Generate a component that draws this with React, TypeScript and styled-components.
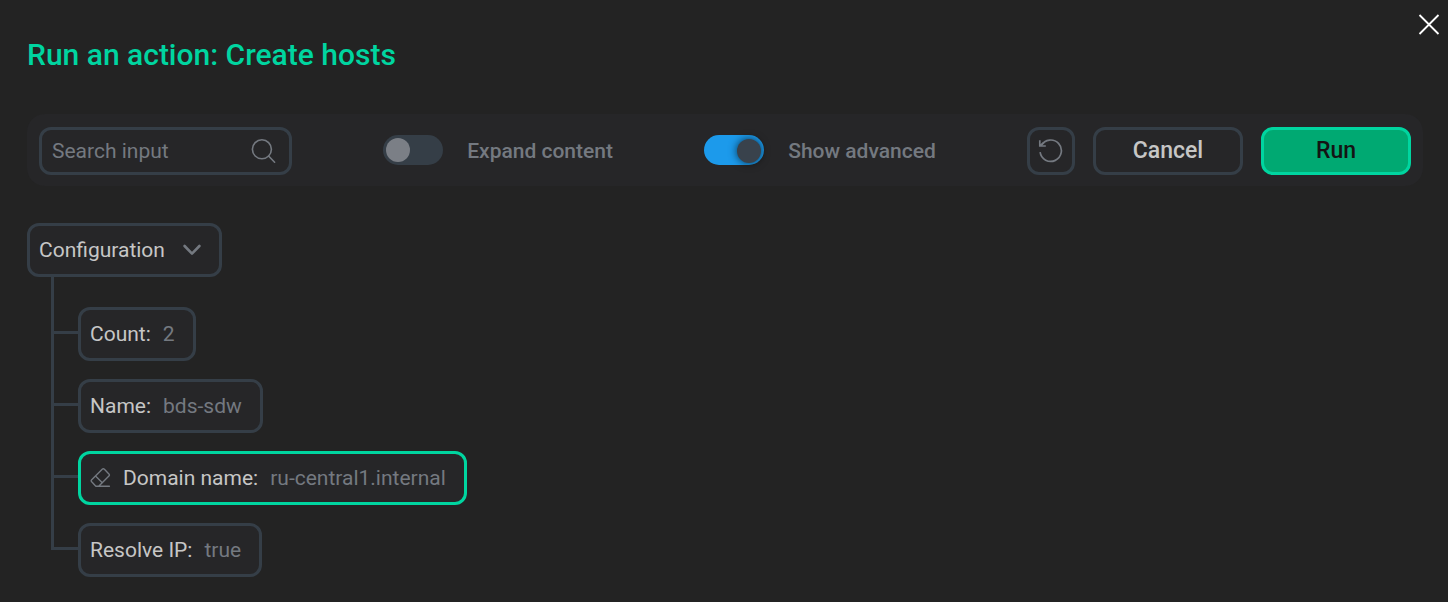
import React, { useState } from "react";
import styled, { createGlobalStyle } from "styled-components";

const color = {
  page: "#232323",
  surface: "#262628",
  line: "#353e47",
  text: "#c6c6c6",
  muted: "#747980",
  accent: "#00d5a0",
  run: "#00a972",
  blue: "#1c9aeb",
};

const GlobalStyle = createGlobalStyle`
  *, *::before, *::after { box-sizing: border-box; }
  body {
    margin: 0;
    background: ${color.page};
    color: ${color.text};
    font-family: Roboto, "Liberation Sans", sans-serif;
    font-size: 21px;
    line-height: 30px;
  }
  button, input { font: inherit; color: inherit; }
`;

const Dialog = styled.main`
  display: flex;
  flex-direction: column;
  padding-bottom: 24px;
`;

const Header = styled.header`
  display: flex;
  align-items: flex-start;
  justify-content: space-between;
  padding: 6px 0 0 27px;
  margin-bottom: 41px;
`;

const Title = styled.h1`
  margin: 31px 0 0;
  color: ${color.accent};
  font-size: 30px;
  font-weight: 500;
  line-height: 36px;
`;

const CloseButton = styled.button`
  display: flex;
  padding: 8px;
  border: 0;
  background: none;
  cursor: pointer;
`;

const Toolbar = styled.form`
  display: flex;
  align-items: center;
  justify-content: space-between;
  margin: 0 25px 0 27px;
  padding: 13px 12px 11px;
  border-radius: 18px;
  background: ${color.surface};
`;

const SearchField = styled.label`
  display: flex;
  align-items: center;
  width: 253px;
  height: 48px;
  padding: 0 12px 0 10px;
  border: 3px solid ${color.line};
  border-radius: 12px;
  color: ${color.muted};
`;

const SearchInput = styled.input`
  flex: 1;
  min-width: 0;
  padding: 0;
  border: 0;
  outline: 0;
  background: none;
  color: ${color.text};
  &::placeholder {
    color: ${color.muted};
    opacity: 1;
  }
`;

const SwitchLabel = styled.label`
  display: flex;
  align-items: center;
  gap: 24px;
  color: ${color.muted};
  font-weight: 500;
`;

const SwitchInput = styled.input`
  appearance: none;
  display: flex;
  align-items: center;
  width: 60px;
  height: 30px;
  margin: 0 0 2px;
  padding: 0 3px;
  border-radius: 15px;
  background: ${color.line};
  cursor: pointer;
  &::before {
    content: "";
    width: 24px;
    height: 24px;
    border-radius: 50%;
    background: #7b7f86;
  }
  &:checked {
    justify-content: flex-end;
    padding-top: 2px;
    background: ${color.blue};
  }
  &:checked::before {
    background: #39424c;
    box-shadow: 0 0 9px rgba(0, 0, 0, 0.7);
  }
`;

const Actions = styled.div`
  display: flex;
  gap: 18px;
`;

const Button = styled.button<{ $primary?: boolean; $square?: boolean }>`
  display: flex;
  align-items: center;
  justify-content: center;
  width: ${(p) => (p.$square ? 48 : 150)}px;
  height: 48px;
  padding: 0 0 ${(p) => (p.$square ? 2 : 0)}px;
  border: 3px solid ${(p) => (p.$primary ? color.accent : color.line)};
  border-radius: 12px;
  background: ${(p) => (p.$primary ? color.run : color.surface)};
  color: ${(p) => (p.$primary ? "#141414" : p.$square ? color.muted : color.text)};
  font-size: 23px;
  font-weight: 500;
  cursor: pointer;
`;

const Tree = styled.section`
  display: flex;
  flex-direction: column;
  align-items: flex-start;
  padding: 37px 25px 0 27px;
`;

const Node = styled.button<{ $active?: boolean; $parent?: boolean }>`
  display: flex;
  align-items: center;
  gap: ${(p) => (p.$parent ? 18 : 12)}px;
  height: 54px;
  padding: 0 18px 0 9px;
  border: 3px solid ${(p) => (p.$active ? color.accent : color.line)};
  border-radius: 12px;
  background: ${color.surface};
  cursor: pointer;
`;

const NodeValue = styled.span`
  color: ${color.muted};
`;

const NodeIcon = styled.svg`
  color: ${color.muted};
`;

const Children = styled.ul`
  margin: 0;
  padding: 0 0 0 24px;
  list-style: none;
`;

const Branch = styled.li`
  --space: 18px;
  display: flex;
  align-items: flex-end;
  &:first-child {
    --space: 30px;
  }
`;

const Connector = styled.span`
  display: flex;
  flex-direction: column;
  align-self: stretch;
  width: 27px;
  &::before {
    content: "";
    height: calc(var(--space) + 27px);
    border-left: 3px solid ${color.line};
    border-bottom: 3px solid ${color.line};
  }
  &::after {
    content: "";
    flex: 1;
    border-left: 3px solid ${color.line};
  }
  ${Branch}:last-child &::after {
    border-left-color: transparent;
  }
`;

const NodeSlot = styled.div`
  padding-top: var(--space);
`;

const CloseIcon = () => (
  <svg width="22" height="22" viewBox="0 0 22 22" fill="none" stroke="#fff" strokeWidth="1.8" aria-hidden="true">
    <path d="M1.5 1 20.5 20M20.5 1 1.5 20" />
  </svg>
);

const SearchIcon = () => (
  <svg width="26" height="26" viewBox="0 0 26 26" fill="none" stroke="currentColor" strokeWidth="1.6" strokeLinecap="round" aria-hidden="true">
    <circle cx="10.9" cy="11.3" r="9.5" />
    <path d="M17.6 18 23.6 24.2" />
  </svg>
);

const ResetIcon = () => (
  <svg width="26" height="26" viewBox="0 0 26 26" fill="none" stroke="currentColor" strokeWidth="1.7" aria-hidden="true">
    <path d="M2.1 15.2A10.7 10.7 0 1 0 3.4 8.4" />
    <path d="M1.8 3.2V9H7.8M1.8 9 6 5.4" />
  </svg>
);

const ChevronIcon = () => (
  <NodeIcon width="18" height="12" viewBox="0 0 18 12" fill="none" stroke="currentColor" strokeWidth="2.6" strokeLinecap="round" strokeLinejoin="round" aria-hidden="true">
    <path d="M1.6 2 9 9.6 16.4 2" />
  </NodeIcon>
);

const EraserIcon = () => (
  <NodeIcon width="21" height="21" viewBox="0 0 21 21" fill="none" stroke="currentColor" strokeWidth="1.4" strokeLinecap="round" strokeLinejoin="round" aria-hidden="true">
    <path d="M5.6 17.4 1.7 13.3Q.7 12.2 1.7 11.2L12.2.8Q13.3-.2 14.4.8L18.9 5.4Q19.9 6.5 18.9 7.6L9.2 17.2Q8.7 17.7 8 17.7H6.4Q5.9 17.7 5.6 17.4ZM5.5 7.5 12.3 14.2M8 17.7H19.4" transform="translate(0 .5)" />
  </NodeIcon>
);

const fields = [
  { label: "Count", value: "2" },
  { label: "Name", value: "bds-sdw" },
  { label: "Domain name", value: "ru-central1.internal", edited: true },
  { label: "Resolve IP", value: "true" },
];

interface SwitchProps {
  label: string;
  initial?: boolean;
}

const Switch = ({ label, initial = false }: SwitchProps) => {
  const [on, setOn] = useState(initial);
  return (
    <SwitchLabel>
      <SwitchInput type="checkbox" role="switch" checked={on} onChange={(e) => setOn(e.target.checked)} />
      {label}
    </SwitchLabel>
  );
};

export default function App() {
  const [open, setOpen] = useState(true);
  return (
    <>
      <GlobalStyle />
      <Dialog>
        <Header>
          <Title>Run an action: Create hosts</Title>
          <CloseButton type="button" aria-label="Close">
            <CloseIcon />
          </CloseButton>
        </Header>
        <Toolbar onSubmit={(e) => e.preventDefault()}>
          <SearchField>
            <SearchInput type="text" placeholder="Search input" aria-label="Search input" />
            <SearchIcon />
          </SearchField>
          <Switch label="Expand content" />
          <Switch label="Show advanced" initial />
          <Actions>
            <Button type="button" $square aria-label="Reset">
              <ResetIcon />
            </Button>
            <Button type="button">Cancel</Button>
            <Button type="submit" $primary>
              Run
            </Button>
          </Actions>
        </Toolbar>
        <Tree>
          <Node type="button" $parent aria-expanded={open} onClick={() => setOpen(!open)}>
            Configuration
            <ChevronIcon />
          </Node>
          {open && (
            <Children>
              {fields.map((field) => (
                <Branch key={field.label}>
                  <Connector />
                  <NodeSlot>
                    <Node type="button" $active={field.edited}>
                      {field.edited && <EraserIcon />}
                      <span>{field.label}:</span>
                      <NodeValue>{field.value}</NodeValue>
                    </Node>
                  </NodeSlot>
                </Branch>
              ))}
            </Children>
          )}
        </Tree>
      </Dialog>
    </>
  );
}
